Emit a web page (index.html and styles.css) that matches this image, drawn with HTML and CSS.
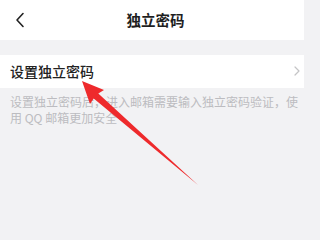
FILE: index.html
```html
<!DOCTYPE html>
<html lang="zh-CN">
<head>
<meta charset="utf-8">
<link rel="stylesheet" href="styles.css">
</head>
<body>
<div class="page">
  <header class="nav">
    <svg class="back" width="10" height="16" viewBox="0 0 10 16"><path d="M8 1.5 L2 8 L8 14.5" fill="none" stroke="#222" stroke-width="1.6" stroke-linecap="round" stroke-linejoin="round"/></svg>
    <div class="title">独立密码</div>
  </header>
  <div class="gap"></div>
  <div class="row">
    <span class="label">设置独立密码</span>
    <svg class="chev" width="6" height="10" viewBox="0 0 6 10"><path d="M1 1 L5 5 L1 9" fill="none" stroke="#c4c4c6" stroke-width="1.2" stroke-linecap="round" stroke-linejoin="round"/></svg>
  </div>
  <p class="desc">设置独立密码后，进入邮箱需要输入独立密码验证，使用 QQ 邮箱更加安全</p>
  <svg class="arrow" width="304" height="227" viewBox="0 0 304 227"><polygon points="82,81 104,90 98.3,93.4 198,185 93.7,98.6 90,104" fill="#ee2a2c"/></svg>
</div>
</body>
</html>
```
FILE: styles.css
```css
html, body { margin: 0; padding: 0; }
body { background: #f2f2f4; font-family: "Noto Sans CJK SC", "Noto Sans", sans-serif; }
.page { position: relative; width: 304px; height: 227px; overflow: hidden; }
.nav { height: 40px; background: #fff; display: flex; align-items: center; position: relative; }
.back { margin-left: 15px; }
.title { position: absolute; left: 0; right: 0; text-align: center; padding-left: 7px; font-size: 14.5px; font-weight: 600; color: #1e1e1e; line-height: 40px; top: 0; }
.gap { height: 15px; }
.row { height: 33px; background: #fff; display: flex; align-items: center; justify-content: space-between; padding: 0 4px 0 10px; }
.label { font-size: 14px; font-weight: 500; color: #222; line-height: 20px; margin-top: -1px; }
.chev { margin-right: 0; margin-top: -1px; }
.desc { margin: 0; padding: 6px 4px 0 10px; font-size: 12px; line-height: 16px; color: #bcbcc0; }
.arrow { position: absolute; left: 0; top: 0; }
```
